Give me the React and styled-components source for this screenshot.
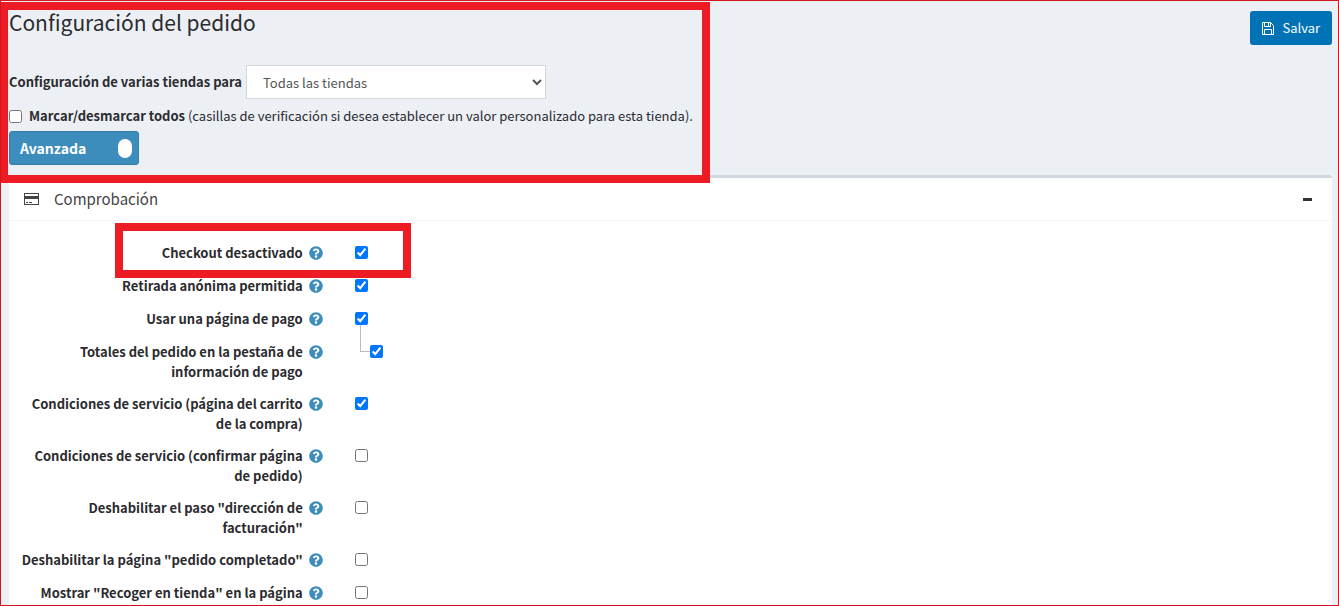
import React, { useState } from 'react';
import styled, { createGlobalStyle } from 'styled-components';
import { FaQuestionCircle } from 'react-icons/fa';

const GlobalStyle = createGlobalStyle`
  *, *::before, *::after { box-sizing: border-box; }
  body {
    margin: 0;
    background: #ecf0f5;
    color: #2b2b2f;
    font-family: "Noto Sans CJK SC", "Noto Sans", sans-serif;
    font-size: 13px;
    line-height: 20px;
  }
  button, select, input { font: inherit; }
`;

const Page = styled.div`
  height: 100vh;
  overflow: hidden;
  padding: 0 6px 0 8px;
  border: 1px solid #d2161e;
`;

const Header = styled.header`
  position: relative;
  display: flex;
  justify-content: space-between;
  align-items: flex-start;
  height: 174px;
`;

const Title = styled.h1`
  margin: 6px 0 28px;
  font-size: 21px;
  line-height: 30px;
  font-weight: 400;
`;

const StoreRow = styled.div`
  display: flex;
  align-items: center;
  gap: 4px;
`;

const StrongLabel = styled.label`
  font-weight: 700;
`;

const StoreSelect = styled.select`
  width: 300px;
  height: 34px;
  padding: 6px 12px;
  border: 1px solid #d2d6de;
  border-radius: 0;
  background: #fff;
  color: #555;
`;

const CheckAll = styled.label`
  display: flex;
  align-items: center;
  gap: 7px;
  margin: 7px 0 5px;
`;

const Checkbox = styled.input.attrs({ type: 'checkbox' })`
  flex: none;
  width: 13px;
  height: 13px;
  margin: 0;
`;

const ModeSwitch = styled.button`
  display: flex;
  align-items: center;
  justify-content: space-between;
  width: 130px;
  height: 34px;
  padding: 0 6px 0 10px;
  border: 1px solid #367fa9;
  border-radius: 3px;
  background: #3c8dbc;
  color: #fff;
  font-size: 14px;
  font-weight: 700;
`;

const Knob = styled.span`
  width: 14px;
  height: 19px;
  border-radius: 7px;
  background: #fff;
`;

const SaveButton = styled.button`
  display: flex;
  align-items: center;
  gap: 8px;
  height: 34px;
  margin-top: 10px;
  padding: 0 12px;
  border: 0;
  border-radius: 3px;
  background: #0073b7;
  color: #fff;
`;

const Highlight = styled.div`
  position: absolute;
  border: 8px solid #ed1c24;
  pointer-events: none;
`;

const HeaderHighlight = styled(Highlight)`
  top: 1px;
  left: -9px;
  width: 710px;
  height: 181px;
`;

const RowHighlight = styled(Highlight)`
  top: -20px;
  left: 96px;
  width: 296px;
  height: 55px;
`;

const Card = styled.section`
  border-top: 3px solid #d2d6de;
  border-radius: 3px;
  background: #fff;
`;

const CardHeader = styled.div`
  display: flex;
  align-items: center;
  justify-content: space-between;
  height: 43px;
  padding: 0 20px 0 15px;
  border-bottom: 1px solid #f4f4f4;
  color: #444;
`;

const CardTitle = styled.h2`
  display: flex;
  align-items: center;
  gap: 15px;
  margin: 0;
  font-size: 15px;
  line-height: 20px;
  font-weight: 400;
`;

const CollapseButton = styled.button`
  display: flex;
  padding: 0;
  border: 0;
  background: none;
  color: #333;
`;

const Settings = styled.div`
  display: flex;
  flex-direction: column;
  gap: 12px;
  padding: 22px 10px 10px;
`;

const SettingRow = styled.div`
  position: relative;
  display: grid;
  grid-template-columns: 25% 1fr;
  min-height: 21px;
`;

const LabelCell = styled.div`
  display: flex;
  align-items: flex-start;
  justify-content: flex-end;
  gap: 6px;
  padding-right: 22px;
  text-align: right;
  font-weight: 700;
`;

const HelpIcon = styled(FaQuestionCircle)`
  flex: none;
  margin-top: 3px;
  color: #3c8dbc;
`;

const ControlCell = styled.div`
  display: flex;
  align-items: flex-start;
  padding: 3px 10px 0;
`;

const Branch = styled.span`
  align-self: flex-start;
  width: 10px;
  height: 27px;
  margin: -20px 0 0 5px;
  border: solid #bbb;
  border-width: 0 0 1px 1px;
`;

const SaveIcon = () => (
  <svg width="12" height="13" viewBox="0 0 12 13" fill="none" stroke="currentColor" aria-hidden="true">
    <path d="M.5.5H8.5L11.5 3.5V12.5H.5Z" />
    <path d="M2.5.5V4.5H8.5V.5" />
    <path d="M6.5 1V4" />
    <path d="M2.5 12.5V7.5H9.5V12.5" />
  </svg>
);

const CardIcon = () => (
  <svg width="15" height="12" viewBox="0 0 15 12" fill="currentColor" aria-hidden="true">
    <path fillRule="evenodd" d="M0 0H15V12H0ZM1 1V3H14V1ZM1 6V11H14V6Z" />
    <path d="M2 9H4V10H2ZM5 9H8V10H5Z" />
  </svg>
);

const MinusIcon = () => (
  <svg width="9" height="3" viewBox="0 0 9 3" fill="currentColor" aria-hidden="true">
    <path d="M0 0H9V3H0Z" />
  </svg>
);

const settings = [
  { id: 'checkout-disabled', label: 'Checkout desactivado', on: true, marked: true },
  { id: 'anonymous', label: 'Retirada anónima permitida', on: true },
  { id: 'one-page', label: 'Usar una página de pago', on: true },
  { id: 'totals', label: 'Totales del pedido en la pestaña de información de pago', on: true, nested: true },
  { id: 'terms-cart', label: 'Condiciones de servicio (página del carrito de la compra)', on: true },
  { id: 'terms-confirm', label: 'Condiciones de servicio (confirmar página de pedido)' },
  { id: 'billing-step', label: 'Deshabilitar el paso "dirección de facturación"' },
  { id: 'completed-page', label: 'Deshabilitar la página "pedido completado"' },
  { id: 'pickup', label: 'Mostrar "Recoger en tienda" en la página' },
];

export default function App() {
  const [open, setOpen] = useState(true);
  return (
    <>
      <GlobalStyle />
      <Page>
        <Header>
          <div>
            <Title>Configuración del pedido</Title>
            <StoreRow>
              <StrongLabel htmlFor="store">Configuración de varias tiendas para</StrongLabel>
              <StoreSelect id="store">
                <option>Todas las tiendas</option>
              </StoreSelect>
            </StoreRow>
            <CheckAll>
              <Checkbox />
              <span>
                <b>Marcar/desmarcar todos</b> (casillas de verificación si desea establecer un valor
                personalizado para esta tienda).
              </span>
            </CheckAll>
            <ModeSwitch type="button">
              Avanzada
              <Knob />
            </ModeSwitch>
          </div>
          <SaveButton type="button">
            <SaveIcon />
            Salvar
          </SaveButton>
          <HeaderHighlight />
        </Header>
        <Card>
          <CardHeader>
            <CardTitle>
              <CardIcon />
              Comprobación
            </CardTitle>
            <CollapseButton type="button" aria-label="Contraer" onClick={() => setOpen(!open)}>
              <MinusIcon />
            </CollapseButton>
          </CardHeader>
          {open && (
            <Settings>
              {settings.map((s) => (
                <SettingRow key={s.id}>
                  <LabelCell>
                    <label htmlFor={s.id}>{s.label}</label>
                    <HelpIcon size={14} />
                  </LabelCell>
                  <ControlCell>
                    {s.nested && <Branch />}
                    <Checkbox id={s.id} defaultChecked={s.on} />
                  </ControlCell>
                  {s.marked && <RowHighlight />}
                </SettingRow>
              ))}
            </Settings>
          )}
        </Card>
      </Page>
    </>
  );
}
